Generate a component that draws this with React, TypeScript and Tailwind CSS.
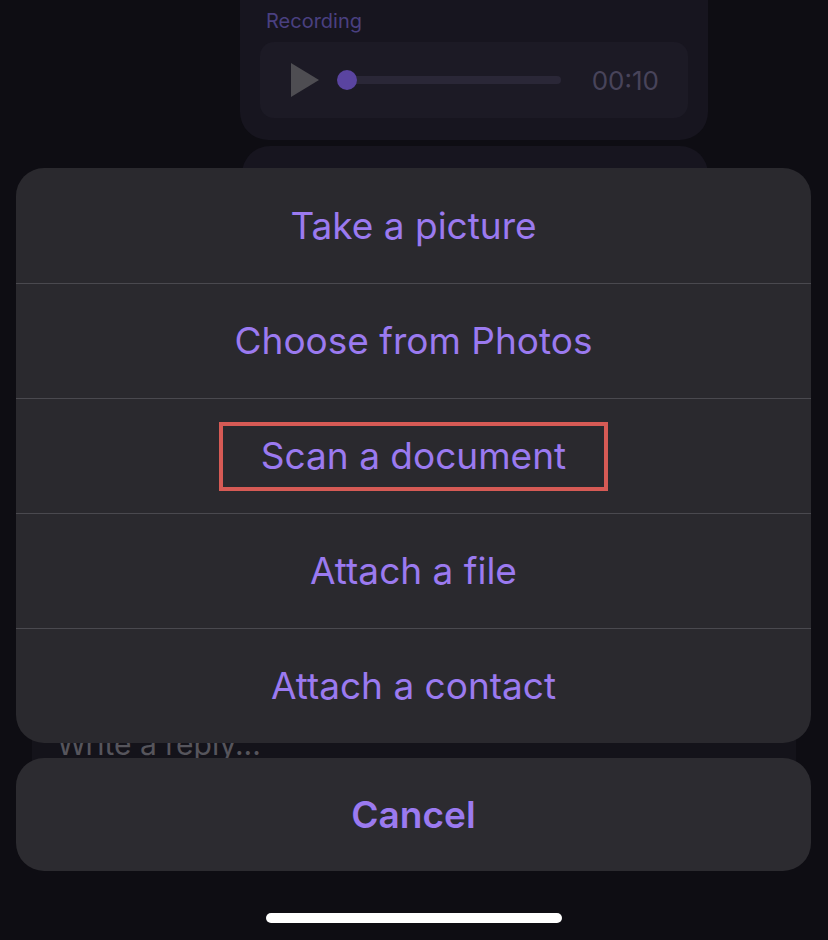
import React from "react";

const actions = [
  "Take a picture",
  "Choose from Photos",
  "Scan a document",
  "Attach a file",
  "Attach a contact",
];

export default function App() {
  return (
    <div
      className="relative h-[940px] w-[828px] overflow-hidden bg-[#0e0d13]"
      style={{ fontFamily: "Inter, 'Noto Sans', sans-serif" }}
    >
      {/* chat behind the sheet */}
      <div className="flex flex-col">
        <div className="ml-[240px] mt-[-40px] w-[468px] rounded-[28px] bg-[#17151f] px-5 pb-[22px] pt-[46px]">
          <div className="pl-[6px] text-[20px] leading-[30px] text-[#4a4080]">Recording</div>
          <div className="mt-[6px] flex h-[76px] items-center rounded-[14px] bg-[#1c1a25] pl-[31px] pr-[29px]">
            <svg width="28" height="34" viewBox="0 0 28 34">
              <path d="M0 0 L28 17 L0 34 Z" fill="#4e4d52" />
            </svg>
            <div className="relative ml-[18px] h-[20px] w-[224px]">
              <div className="absolute left-[10px] right-0 top-[6px] h-[8px] rounded-full bg-[#2a2737]" />
              <div className="absolute left-0 top-0 h-[20px] w-[20px] rounded-full bg-[#5a44a0]" />
            </div>
            <div className="ml-auto text-[26px] text-[#48445a]">00:10</div>
          </div>
        </div>
        <div className="ml-[242px] mt-[6px] h-[300px] w-[466px] rounded-t-[28px] bg-[#17151f]" />
        <div className="ml-[32px] mt-[270px] h-[140px] w-[764px] bg-[#14131a] pl-[25px] pt-[6px] text-[30px] text-[#56555c]">
          Write a reply...
        </div>
      </div>

      {/* action sheet */}
      <div className="absolute left-[16px] top-[168px] w-[795px] overflow-hidden rounded-[28px] bg-[#2a292e]">
        {actions.map((a, i) => (
          <div
            key={a}
            className={`flex h-[115px] items-center justify-center ${i > 0 ? "border-t border-[#4a494f]" : ""}`}
          >
            {i === 2 ? (
              <span className="flex h-[69px] w-[389px] items-center justify-center border-[4px] border-[#d65a55] text-[37px] text-[#9b7af0]">
                {a}
              </span>
            ) : (
              <span className="text-[37px] text-[#9b7af0]">{a}</span>
            )}
          </div>
        ))}
      </div>

      <div className="absolute left-[16px] top-[758px] flex h-[113px] w-[795px] items-center justify-center rounded-[28px] bg-[#2c2b30]">
        <span className="text-[37px] font-semibold text-[#9b7af0]">Cancel</span>
      </div>

      <div className="absolute left-[266px] top-[913px] h-[10px] w-[296px] rounded-full bg-white" />
    </div>
  );
}
